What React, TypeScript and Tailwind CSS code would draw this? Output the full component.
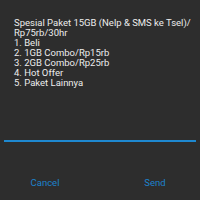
export default function App() {
  const lines = [
    "Spesial Paket 15GB (Nelp & SMS ke Tsel)/",
    "Rp75rb/30hr",
    "1. Beli",
    "2. 1GB Combo/Rp15rb",
    "3. 2GB Combo/Rp25rb",
    "4. Hot Offer",
    "5. Paket Lainnya",
  ];

  return (
    <div className="w-[200px] h-[200px] bg-[#2d2d2d] flex flex-col font-['Roboto',sans-serif]">
      {/* USSD message */}
      <div className="pt-[18px] pl-[14px] pr-2 text-[9.5px] leading-[10px] text-[#ececec]">
        {lines.map((l) => (
          <div key={l} className="whitespace-nowrap">{l}</div>
        ))}
      </div>

      {/* Reply input */}
      <div className="mt-[52px] mx-[4px] h-[2px] bg-[#1e88d0]" />

      {/* Actions */}
      <div className="mt-[35px] flex text-[9.5px] leading-[12px] text-[#1d82cc]">
        <button type="button" className="w-[90px] text-center">Cancel</button>
        <button type="button" className="ml-[20px] w-[90px] text-center">Send</button>
      </div>
    </div>
  );
}
